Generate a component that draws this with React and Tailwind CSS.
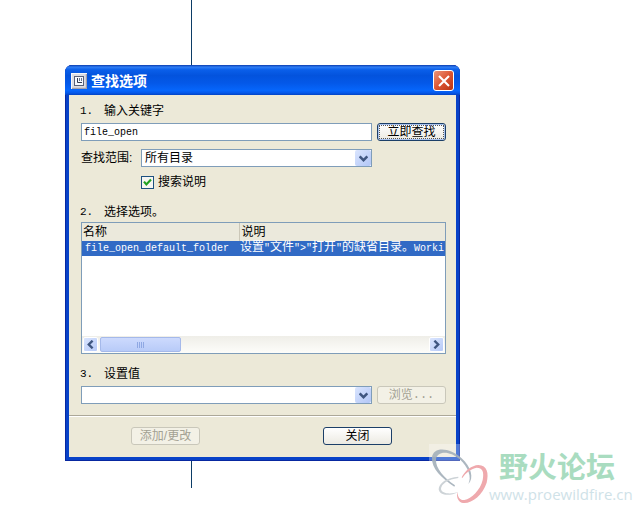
import React from "react";

const CJK = "font-['Liberation_Sans','Noto_Sans_CJK_SC',sans-serif]";
const MONO = "font-['Liberation_Mono','Noto_Sans_CJK_SC',monospace]";

function StepLabel({ number, children, htmlFor }) {
  return (
    <label htmlFor={htmlFor} className="-ml-px flex h-4 items-center leading-4">
      <span className={`w-6 text-[11px] ${MONO}`}>{number}.</span>
      <span>{children}</span>
    </label>
  );
}

function Chevron({ className = "" }) {
  return (
    <svg viewBox="0 0 9 9" className={`size-[9px] ${className}`} fill="none" stroke="#3f5680" strokeWidth="2.4" aria-hidden="true">
      <path d="M0.7 2.4 4.5 6.2 8.3 2.4" />
    </svg>
  );
}

function ComboBox({ id, options }) {
  return (
    <div className="relative min-w-0 flex-1">
      <select
        id={id}
        className="block h-[18px] w-full appearance-none rounded-none border border-[#7f9db9] bg-white pr-5 pl-[3px] text-xs leading-4 text-black outline-none"
      >
        {options.map((o) => (
          <option key={o}>{o}</option>
        ))}
      </select>
      <span className="pointer-events-none absolute inset-y-px right-px flex w-4 items-center justify-center rounded-xs bg-linear-to-br from-[#dae5fe] to-[#b2c6f6]">
        <Chevron />
      </span>
    </div>
  );
}

function Button({ children, kind = "normal" }) {
  const kinds = {
    normal: "border-[#1c3f68] bg-linear-to-b from-white to-[#eceae2] text-black",
    focus:
      "border-[#1c3f68] bg-linear-to-b from-white to-[#eceae2] text-black shadow-[inset_0_0_0_1px_#a9c2ee]",
    disabled: "border-[#c9c7ba] bg-[#f3f1e6] text-[#a3a193]",
  };
  return (
    <button
      type="button"
      disabled={kind === "disabled"}
      className={`relative flex h-[18px] w-[69px] shrink-0 items-center justify-center rounded-[3px] border text-xs leading-4 ${kinds[kind]}`}
    >
      {children}
      {kind === "focus" && <span className="absolute inset-px border border-dotted border-[#555555]" />}
    </button>
  );
}

function ScrollArrow({ label, turn }) {
  return (
    <button
      type="button"
      aria-label={label}
      className="flex h-[15px] w-[15px] shrink-0 items-center justify-center rounded-xs border border-white bg-linear-to-br from-[#dae5fe] to-[#b6c9f7]"
    >
      <Chevron className={turn} />
    </button>
  );
}

function TitleBar() {
  return (
    <header className="flex h-[30px] items-center rounded-t-[6px] bg-[linear-gradient(180deg,#0a3cae_0%,#2f7df5_7%,#0a5fea_16%,#0353dd_35%,#0458e8_60%,#0666fc_85%,#0558ea_93%,#0344c4_100%)] pt-px pr-1.5 pl-1.5">
      <svg viewBox="0 0 16 16" className="size-4" aria-hidden="true">
        <rect width="16" height="16" fill="#dcdde4" />
        <path d="M0 16V0h16" fill="none" stroke="#f8f8f8" strokeWidth="2" />
        <path d="M1 15.4h14.4V1" fill="none" stroke="#a5a0a8" strokeWidth="1.2" />
        <rect x="3.5" y="3.5" width="9" height="9" fill="#f7f9ff" stroke="#59617a" />
        <path d="M6.5 5v4.5h4.5" fill="none" stroke="#333b50" />
        <path d="M8.5 5v3M10.5 5v3" stroke="#6a7890" />
      </svg>
      <h1 className="ml-1 text-sm leading-5 font-bold text-white">查找选项</h1>
      <button
        type="button"
        aria-label="关闭窗口"
        className="ml-auto flex size-[21px] items-center justify-center rounded-[3px] border border-white bg-linear-to-br from-[#ec9478] via-[#dc5532] to-[#b9330f]"
      >
        <svg viewBox="0 0 12 12" className="size-3" stroke="white" strokeWidth="2.1" aria-hidden="true">
          <path d="M1 1 11 11M11 1 1 11" />
        </svg>
      </button>
    </header>
  );
}

function ResultList() {
  return (
    <div className="flex h-[132px] flex-col overflow-hidden border border-[#7f9db9] bg-white">
      <div className="min-h-0 flex-1 overflow-hidden">
        <table className="w-full table-fixed border-collapse text-left whitespace-nowrap">
          <colgroup>
            <col className="w-[157px]" />
            <col />
          </colgroup>
          <thead>
            <tr className="h-[18px] bg-[#ebe9dc]">
              <th className="border-r border-[#cbc7b8] p-0 pl-px text-xs leading-[18px] font-normal">名称</th>
              <th className="p-0 pl-0.5 text-xs leading-[18px] font-normal">说明</th>
            </tr>
          </thead>
          <tbody>
            <tr className="h-[15px] bg-[#316ac5] text-white">
              <td className={`p-0 pl-[3px] text-[10px] leading-[15px] ${MONO}`}>
                file_open_default_folder
              </td>
              <td className={`p-0 pl-px text-[10px] leading-[15px] ${MONO}`}>
                <span className="text-xs leading-[15px]">设置</span>"
                <span className="text-xs leading-[15px]">文件</span>"&gt;"
                <span className="text-xs leading-[15px]">打开</span>"
                <span className="text-xs leading-[15px]">的缺省目录。</span>Worki
              </td>
            </tr>
          </tbody>
        </table>
      </div>
      <div className="flex h-[17px] items-center gap-0.5 bg-linear-to-b from-[#efeee8] to-[#fdfdfa] px-px">
        <ScrollArrow label="向左滚动" turn="rotate-90" />
        <div className="flex h-[15px] w-[81px] items-center justify-center gap-px rounded-xs border border-[#a5b9ea] bg-linear-to-b from-[#cddafd] to-[#b8cbf8]">
          <span className="h-1.5 w-px bg-[#8fa8e3]" />
          <span className="h-1.5 w-px bg-[#8fa8e3]" />
          <span className="h-1.5 w-px bg-[#8fa8e3]" />
          <span className="h-1.5 w-px bg-[#8fa8e3]" />
        </div>
        <div className="flex-1" />
        <ScrollArrow label="向右滚动" turn="-rotate-90" />
      </div>
    </div>
  );
}

function Dialog() {
  return (
    <section
      aria-label="查找选项"
      className="relative w-[395px] max-w-full overflow-hidden rounded-t-[7px] bg-[#0842c8] text-xs text-black shadow-[inset_0_0_0_1px_#0828a0]"
    >
      <TitleBar />
      <div className="mx-1 mb-1 bg-[#ece9d8]">
        <div className="pt-2 pr-2.5 pb-[11px] pl-3">
          <StepLabel number="1" htmlFor="keyword">输入关键字</StepLabel>
          <div className="mt-1 flex gap-[5px]">
            <input
              id="keyword"
              type="text"
              defaultValue="file_open"
              className={`h-[18px] min-w-0 flex-1 border border-[#7f9db9] bg-white px-0.5 text-[10px] leading-4 outline-none ${MONO}`}
            />
            <Button kind="focus">立即查找</Button>
          </div>
          <div className="mt-2 flex items-center pr-[74px]">
            <label htmlFor="range" className="w-[60px] shrink-0 leading-[18px]">查找范围:</label>
            <ComboBox id="range" options={["所有目录"]} />
          </div>
          <label className="mt-1.5 ml-[60px] flex h-[18px] w-fit items-center gap-1">
            <input
              type="checkbox"
              defaultChecked
              className="peer size-[13px] appearance-none border border-[#1c5180] bg-[#f6f6f2]"
            />
            <svg viewBox="0 0 13 13" className="pointer-events-none -ml-[17px] size-[13px]" fill="none" stroke="#21a121" strokeWidth="2.2" aria-hidden="true">
              <path d="M3 5.6 5.4 8.4 10 3.6" />
            </svg>
            <span className="leading-[18px]">搜索说明</span>
          </label>
          <div className="mt-[13px] mb-0.5">
            <StepLabel number="2">选择选项。</StepLabel>
          </div>
          <ResultList />
          <div className="mt-3 mb-1">
            <StepLabel number="3" htmlFor="value">设置值</StepLabel>
          </div>
          <div className="flex gap-[5px]">
            <ComboBox id="value" options={[""]} />
            <Button kind="disabled">
              浏览<span className={MONO}>...</span>
            </Button>
          </div>
        </div>
        <footer className="flex justify-between border-t border-[#aca899] pt-[11px] pr-16 pb-3 pl-[62px] shadow-[inset_0_1px_0_white]">
          <Button kind="disabled">添加/更改</Button>
          <Button>关闭</Button>
        </footer>
      </div>
    </section>
  );
}

function Watermark() {
  return (
    <div className="pointer-events-none absolute top-[444px] left-[429px] flex">
      <svg viewBox="12 12 180 186" className="h-[62px] w-[60px]" aria-hidden="true">
        <rect x="12" y="12" width="96" height="51" fill="white" fillOpacity="0.3" />
        <path
          fill="#a3afb9"
          fillOpacity="0.9"
          d="M88 140C50 115 18 85 21 52C25 18 75 22 110 55C138 80 148 115 130 132C141 112 130 82 104 58C72 30 36 33 33 58C31 85 58 115 90 136Z"
        />
        <path
          fill="#efa9ad"
          d="M110 112C120 92 140 76 160 75C187 76 192 100 185 128C172 168 135 195 110 188C98 183 94 170 97 155C98 172 106 182 118 180C140 176 166 150 173 120C178 95 172 83 155 83C140 85 122 98 112 114Z"
        />
        <path
          fill="#cdd3d7"
          d="M100 110C65 112 41 130 41 148C44 168 75 169 100 156C78 163 50 162 48 147C48 132 70 118 100 114Z"
        />
      </svg>
      <div className="whitespace-nowrap">
        <p className="pl-2.5 font-['Noto_Sans_CJK_SC',sans-serif] text-[29px] leading-[42px] font-bold text-[#a9dcc0]">野火论坛</p>
        <p className="font-['Open_Sans',sans-serif] text-[15px] leading-4 text-[#cfe2e8]">www.proewildfire.cn</p>
      </div>
    </div>
  );
}

export default function App() {
  return (
    <main className={`relative min-h-screen overflow-hidden bg-white pt-[65px] pl-[65px] ${CJK}`}>
      <div className="absolute top-0 left-[191px] h-[488px] w-px bg-[#0c3c66]" />
      <Dialog />
      <Watermark />
    </main>
  );
}
